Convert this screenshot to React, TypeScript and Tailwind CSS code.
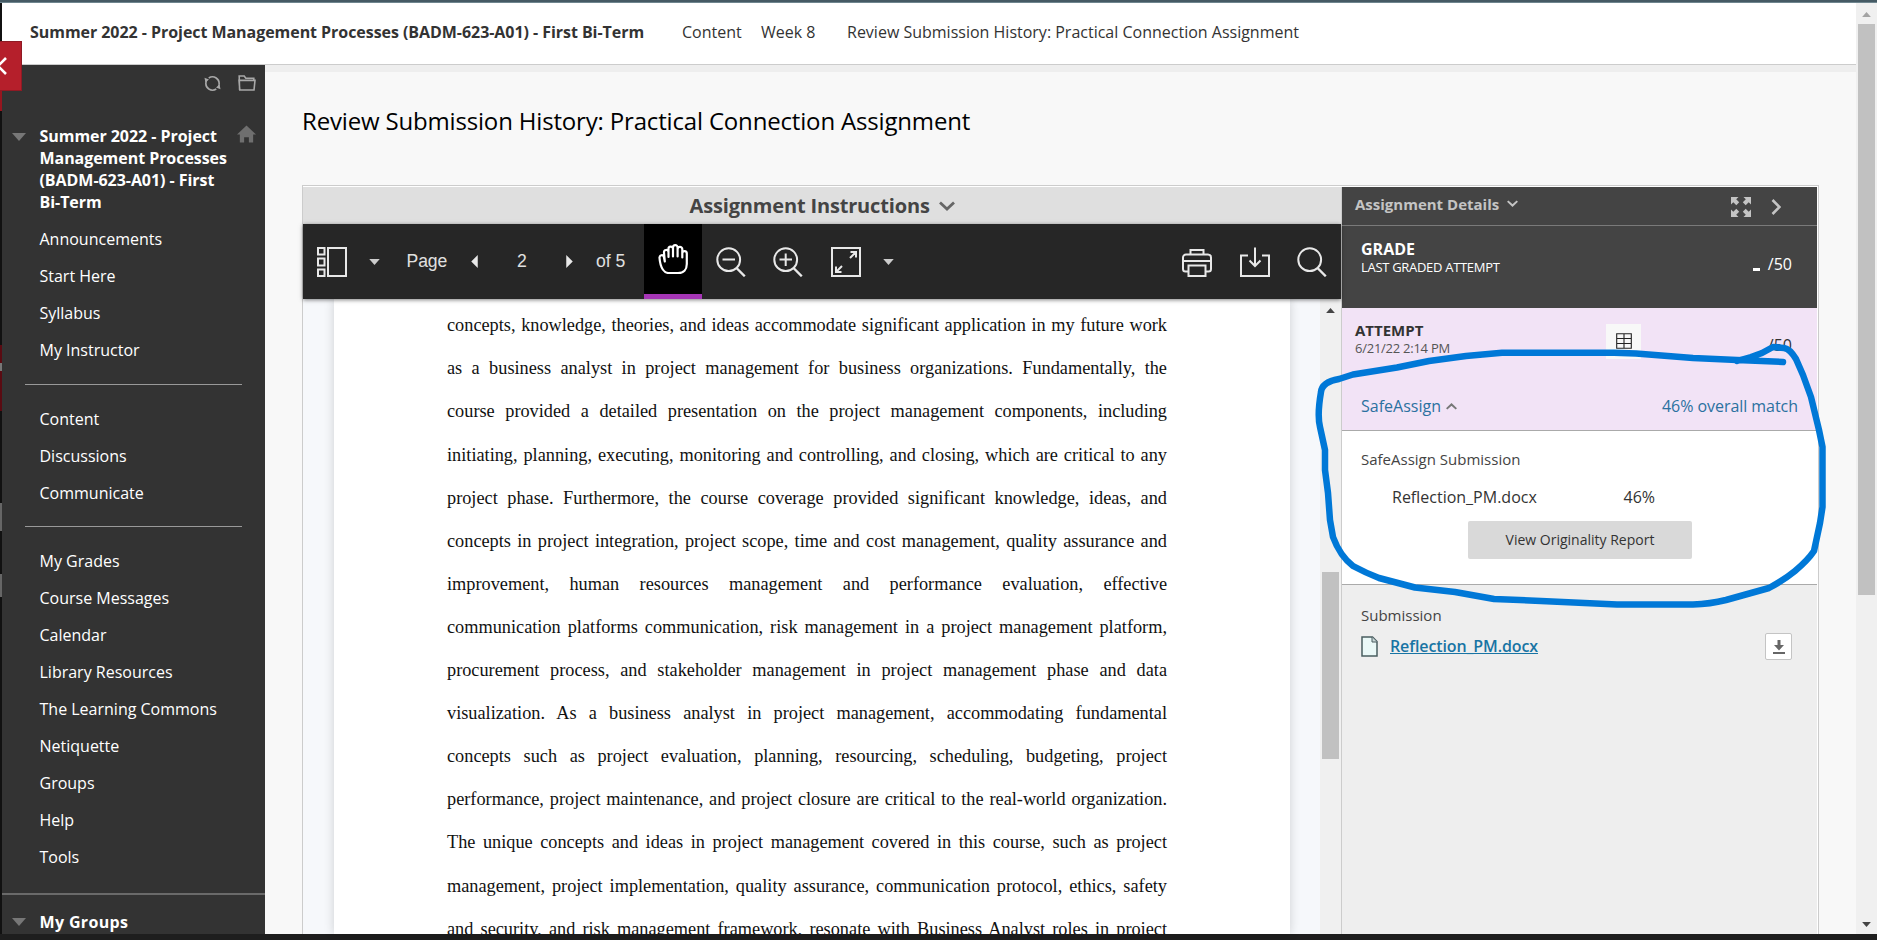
import { clsx } from "clsx";

const menuGroups = [
  ["Announcements", "Start Here", "Syllabus", "My Instructor"],
  ["Content", "Discussions", "Communicate"],
  [
    "My Grades",
    "Course Messages",
    "Calendar",
    "Library Resources",
    "The Learning Commons",
    "Netiquette",
    "Groups",
    "Help",
    "Tools",
  ],
];

const documentLines = [
  "concepts, knowledge, theories, and ideas accommodate significant application in my future work",
  "as a business analyst in project management for business organizations. Fundamentally, the",
  "course provided a detailed presentation on the project management components, including",
  "initiating, planning, executing, monitoring and controlling, and closing, which are critical to any",
  "project phase. Furthermore, the course coverage provided significant knowledge, ideas, and",
  "concepts in project integration, project scope, time and cost management, quality assurance and",
  "improvement, human resources management and performance evaluation, effective",
  "communication platforms communication, risk management in a project management platform,",
  "procurement process, and stakeholder management in project management phase and data",
  "visualization. As a business analyst in project management, accommodating fundamental",
  "concepts such as project evaluation, planning, resourcing, scheduling, budgeting, project",
  "performance, project maintenance, and project closure are critical to the real-world organization.",
  "The unique concepts and ideas in project management covered in this course, such as project",
  "management, project implementation, quality assurance, communication protocol, ethics, safety",
  "and security, and risk management framework, resonate with Business Analyst roles in project",
];

interface iconProps {
  className?: string;
}

const CaretDown = ({ className }: iconProps) => (
  <svg viewBox="0 0 14 8" className={className} fill="currentColor" aria-hidden="true">
    <path d="M0 0h14L7 8z" />
  </svg>
);

const CaretUp = ({ className }: iconProps) => (
  <svg viewBox="0 0 14 8" className={className} fill="currentColor" aria-hidden="true">
    <path d="M0 8h14L7 0z" />
  </svg>
);

const Chevron = ({ className }: iconProps) => (
  <svg
    viewBox="0 0 16 10"
    className={className}
    fill="none"
    stroke="currentColor"
    strokeWidth="2.8"
    aria-hidden="true"
  >
    <path d="M1 1.5l7 6.500 7-6.500" />
  </svg>
);

const ToolIcon = ({ className, children }: iconProps & { children: React.ReactNode }) => (
  <svg
    viewBox="0 0 30 30"
    className={clsx("size-[30px] shrink-0", className)}
    fill="none"
    stroke="#e8e8e8"
    strokeWidth="2"
    aria-hidden="true"
  >
    {children}
  </svg>
);

const Lens = () => (
  <>
    <circle cx="12.7" cy="12.7" r="11.4" />
    <path d="M20.5 21l8.3 8.3" strokeWidth="2.4" />
  </>
);

const Sidebar = () => (
  <aside className="w-[263px] shrink-0 overflow-hidden bg-[#333] text-white">
    <div className="flex h-[36px] items-center justify-end gap-[17px] pr-[9px]">
      <svg viewBox="0 0 18 18" className="size-[17px]" fill="none" stroke="#a8a8a8" strokeWidth="1.7">
        <path d="M5.500 15A7 7 0 0 1 3 5.200M5 3.200A7 7 0 0 1 15.800 10.500M12.500 3A7 7 0 0 1 15 12.800M13 14.800A7 7 0 0 1 2.200 7.500" />
        <path d="M.5 3l1 4.800 3.800-3zM17.500 15l-1-4.800-3.800 3z" fill="#a8a8a8" stroke="none" />
      </svg>
      <svg viewBox="0 0 18 18" className="size-[18px]" fill="none" stroke="#a8a8a8" strokeWidth="1.6">
        <path d="M1.6 16L1.2 2h5l1.6 2.2h8V6.500M1 6.400h16L16 16H1.800z" />
      </svg>
    </div>
    <div className="flex pt-[24px] pl-[10px]">
      <CaretDown className="mt-[8px] h-[8px] w-[14px] text-[#777]" />
      <h2 className="ml-[13.5px] w-[192px] text-base leading-[22px] font-bold tracking-[-0.05px]">
        Summer 2022 - Project Management Processes (BADM-623-A01) - First Bi-Term
      </h2>
      <svg viewBox="0 0 20 18" className="ml-[5px] h-[18px] w-[19px]" fill="#6f6f6f">
        <path d="M10 0L20 9.500H17V18H12.500V12.500H7.500V18H3V9.500H0z" />
      </svg>
    </div>
    <nav className="pt-[8px]">
      {menuGroups.map((group, index) => (
        <ul
          key={group[0]}
          className={clsx(
            index > 0 && "ml-[23px] w-[217px] border-t border-[#999] pt-[16px]",
            index === 1 && "mt-[15px]",
            index === 2 && "mt-[14px]"
          )}
        >
          {group.map((item) => (
            <li
              key={item}
              className={clsx(
                "h-[37px] text-base leading-[37px]",
                index > 0 ? "pl-[14.5px]" : "pl-[37.5px]"
              )}
            >
              {item}
            </li>
          ))}
        </ul>
      ))}
    </nav>
    <div className="mt-[17px] flex items-center border-t-2 border-[#6a6a6a] pt-[16px] pl-[10px]">
      <CaretDown className="h-[8px] w-[14px] text-[#777]" />
      <h2 className="ml-[13.5px] text-base leading-[22px] font-bold tracking-[0.35px]">My Groups</h2>
    </div>
  </aside>
);

const Toolbar = () => (
  <div className="relative z-10 flex h-[75px] shrink-0 items-center bg-[#262626] pr-[14px] pl-[14px] font-['Liberation_Sans',Arial,sans-serif] text-[17.6px] text-[#e0e0e0] shadow-[0_1px_4px_rgba(0,0,0,0.5)]">
    <ToolIcon>
      <path d="M11 1h18v28H11z" />
      <path d="M1 1h6.500v6.500H1zM1 11.500h6.500v7H1zM1 22.500h6.500V29H1z" />
    </ToolIcon>
    <CaretDown className="ml-[22px] h-[6px] w-[11px] text-[#ccc]" />
    <span className="ml-[26.5px] w-[42.500px] tracking-[-0.1px]">Page</span>
    <svg viewBox="0 0 7 14" className="ml-[22px] h-[13px] w-[7px]" fill="#e8e8e8">
      <path d="M7 0v14L0 7z" />
    </svg>
    <span className="ml-[28px] w-[32px] pb-[1px] text-center">2</span>
    <svg viewBox="0 0 7 14" className="ml-[28px] h-[13px] w-[7px]" fill="#e8e8e8">
      <path d="M0 0v14l7-7z" />
    </svg>
    <span className="ml-[23px] w-[48px] whitespace-nowrap">of 5</span>
    <div className="flex h-[75px] w-[58px] justify-center border-b-[5px] border-[#a535b5] bg-black pt-[20px]">
      <svg
        viewBox="0 0 30 30"
        className="size-[30px]"
        fill="none"
        stroke="#fff"
        strokeWidth="2.2"
        strokeLinecap="round"
        strokeLinejoin="round"
      >
        <path d="M6.800 17.500L5.800 12.500C5 10.300 1.300 10.800 1.500 13.800C1.800 18 2.800 22.500 4.800 25.500C6.800 28.500 9 29.200 12 29.200H20C25.500 29.200 28.800 25.500 28.800 20V9.500C28.800 6.200 24.300 6.200 24.300 9.500V13.500M24.300 12V5.200C24.300 2.200 19.600 2.200 19.600 5.200V12.500M19.600 7V3.500C19.600 .3 15 .3 15 3.500V12.500M15 6V4.500C14.500 1.800 10.300 2 10.500 5V13M10.500 8C10 5 5.800 5.500 6 8.500L6.800 17.500" />
      </svg>
    </div>
    <ToolIcon className="ml-[14px]">
      <Lens />
      <path d="M6.500 12.500h12.500" />
    </ToolIcon>
    <ToolIcon className="ml-[27px]">
      <Lens />
      <path d="M6.500 12.500h12.500M12.700 6.500V19" />
    </ToolIcon>
    <ToolIcon className="ml-[28px]">
      <path d="M1 1h28v28H1z" />
      <path d="M19 11l6-6M19.500 5H25v5.500M11 19l-6 6M5 19.500V25h5.500" />
    </ToolIcon>
    <CaretDown className="ml-[22px] h-[6px] w-[11px] text-[#ccc]" />
    <ToolIcon className="ml-auto">
      <path d="M8.500 7.500V3h13v4.500M5.500 24.500H3.500A2.500 2.500 0 0 1 1 22V10.500A3 3 0 0 1 4 7.500h22a3 3 0 0 1 3 3V22a2.500 2.500 0 0 1-2.500 2.500h-2M1 14h28M6.500 18.500h17V29h-17z" />
    </ToolIcon>
    <ToolIcon className="ml-[28px]">
      <path d="M8 8.500H1V29h28V8.500h-7M15 .5v18M9.500 13.500l5.500 5.500 5.500-5.500" />
    </ToolIcon>
    <ToolIcon className="ml-[27px]">
      <Lens />
    </ToolIcon>
  </div>
);

const DocumentViewer = () => (
  <div className="flex w-[1038px] shrink-0 flex-col">
    <div className="flex h-[37px] shrink-0 items-center bg-[#dfdfdf] pl-[386.5px]">
      <h3 className="w-[249px] text-[20px] font-bold tracking-[-0.16px] whitespace-nowrap text-[#444]">
        Assignment Instructions
      </h3>
      <Chevron className="h-[10px] w-[16px] text-[#666]" />
    </div>
    <Toolbar />
    <div className="flex min-h-0 flex-1 bg-[#f6f8fb]">
      <div className="ml-[31px] w-[956px] overflow-hidden bg-white px-[113px] pt-[5.3px] shadow-[0_0_10px_rgba(0,0,0,0.16)]">
        <div className="w-[720px] font-['Liberation_Serif','Times_New_Roman',serif] text-[18.3px] leading-[43.1px] text-[#111]">
          {documentLines.map((line) => (
            <p key={line} className="[text-align-last:justify] whitespace-nowrap">
              {line}
            </p>
          ))}
        </div>
      </div>
      <div className="ml-auto w-[21px] bg-[#f0f0f0] pt-[9px]">
        <CaretUp className="ml-[6px] h-[5px] w-[9px] text-[#444]" />
        <div className="mt-[259px] ml-[2px] h-[187px] w-[17px] bg-[#c1c1c1]" />
      </div>
    </div>
  </div>
);

const AssignmentDetails = () => (
  <div className="flex w-[476px] shrink-0 flex-col border-l border-[#ccc] bg-[#eee]">
    <div className="flex h-[39px] items-center border-b border-[#7a7a7a] bg-[#444] pl-[13px] text-[#c4c4c4]">
      <h3 className="w-[144px] pb-[3px] text-[15px] font-bold whitespace-nowrap">Assignment Details</h3>
      <Chevron className="mb-[5px] ml-[8px] h-[7px] w-[11px]" />
      <svg viewBox="0 0 20 20" className="mt-[1px] ml-auto size-[20px]" fill="currentColor">
        <path d="M0 0h7.500L5.200 2.300l3 3-2.900 2.900-3-3L0 7.500zM20 0v7.500l-2.300-2.300-3 3-2.900-2.900 3-3L12.500 0zM0 20v-7.500l2.300 2.300 3-3 2.900 2.900-3 3L7.500 20zM20 20h-7.500l2.300-2.300-3-3 2.900-2.900 3 3 2.300-2.300z" />
      </svg>
      <svg
        viewBox="0 0 10 16"
        className="mt-[1px] mr-[36px] ml-[20px] h-[16px] w-[10px]"
        fill="none"
        stroke="currentColor"
        strokeWidth="2.6"
      >
        <path d="M1.500 1l7 7-7 7" />
      </svg>
    </div>
    <div className="flex h-[82px] justify-between bg-[#444] pr-[25px] pl-[19px] text-white">
      <div className="pt-[13px]">
        <h4 className="text-base leading-[20px] font-bold">GRADE</h4>
        <p className="text-[13px] leading-[16px] tracking-[-0.3px]">LAST GRADED ATTEMPT</p>
      </div>
      <div className="flex h-[24px] gap-[8px] self-start pt-[26px] text-base leading-[24px]">
        <span className="mt-[16px] h-[3px] w-[7px] bg-white" />
        <span>/50</span>
      </div>
    </div>
    <div className="h-[123px] border-b border-[#aaa] bg-[#f2e3f6] pt-[12px] pr-[19px] pl-[13px]">
      <div className="flex h-[74px] pr-[6px]">
        <div className="w-[251px]">
          <h4 className="text-[15px] leading-[20px] font-bold text-[#333]">ATTEMPT</h4>
          <p className="text-[13px] leading-[17px] tracking-[-0.25px] text-[#555]">6/21/22 2:14 PM</p>
        </div>
        <div className="mt-[4px] flex size-[35px] items-center justify-center bg-[#f8f8f8]">
          <svg viewBox="0 0 16 16" className="mb-[2px] size-[16px]" fill="none" stroke="#222" strokeWidth="1.1">
            <path d="M.7.7h14.600v14.600H.7zM.7 5.500h14.600M.7 10.500h14.600M8 .7v14.600" />
          </svg>
        </div>
        <span className="mt-[13px] ml-auto text-base leading-[24px] text-[#333]">/50</span>
      </div>
      <div className="flex items-center pl-[6px] text-base leading-[24px] text-[#2b71a0]">
        <span>SafeAssign</span>
        <Chevron className="ml-[5px] h-[7px] w-[11px] rotate-180 text-[#777]" />
        <span className="ml-auto tracking-[-0.05px]">46% overall match</span>
      </div>
    </div>
    <div className="h-[154px] border-b border-[#aaa] bg-white pt-[17px] pl-[19px] text-[#333]">
      <p className="text-[15px] leading-[22px] text-[#444]">SafeAssign Submission</p>
      <div className="mt-[15px] flex pl-[31px] text-base leading-[24px]">
        <span className="w-[231.5px]">Reflection_PM.docx</span>
        <span>46%</span>
      </div>
      <button
        type="button"
        className="mt-[12px] ml-[107px] h-[38px] w-[224px] rounded-[2px] bg-[#d9d9d9] pb-[2px] text-[14px] text-[#333]"
      >
        View Originality Report
      </button>
    </div>
    <div className="pt-[19px] pr-[25px] pl-[19px]">
      <p className="text-[15px] leading-[22px] text-[#444]">Submission</p>
      <div className="mt-[7px] flex items-center">
        <svg viewBox="0 0 17 21" className="h-[21px] w-[17px]" stroke="#4a5d60" strokeWidth="1.5">
          <path d="M1 1h10.500L16 5.500V20H1z" fill="#eaf8f7" />
          <path d="M11 1v5h5" fill="#c9d8d8" strokeWidth="1" />
        </svg>
        <a className="mb-[2px] ml-[12px] text-base leading-[24px] font-semibold tracking-[-0.1px] text-[#1874a4] underline">
          Reflection_PM.docx
        </a>
        <div className="ml-auto flex h-[27px] w-[27px] items-center justify-center rounded-[2px] border border-[#c4c4c4] bg-white">
          <svg viewBox="0 0 12 14" className="h-[14px] w-[12px]" fill="#666">
            <path d="M4.500 0h3v5H11L6 10.500 1 5h3.500zM0 12h12v2H0z" />
          </svg>
        </div>
      </div>
    </div>
  </div>
);

const App = () => (
  <div className="relative flex h-[940px] w-[1877px] flex-col overflow-hidden bg-[#1e1e1e] font-['Open_Sans',sans-serif]">
    <div className="h-[3px] shrink-0 border-b border-[#6f868f] bg-[#455a64]" />
    <div className="flex h-[931px] shrink-0">
      <div className="w-[2px] shrink-0 bg-[#111] pt-[87px]">
        <div className="h-[21px] bg-[#96161f]" />
        <div className="mt-[234px] h-[18px] bg-[#5a0b12]" />
        <div className="h-[8px] bg-[#777]" />
        <div className="h-[40px] bg-[#5a0b12]" />
        <div className="mt-[92px] h-[28px] bg-[#666]" />
        <div className="mt-[43px] h-[23px] bg-[#666]" />
      </div>

      <div className="flex w-[1854px] shrink-0 flex-col bg-[#f8f8f8]">
        <header className="flex h-[62px] shrink-0 items-center border-b border-[#ccc] bg-white pb-[3px] pl-[28px] text-base whitespace-nowrap text-[#333]">
          <span className="w-[652px] font-bold tracking-[-0.05px]">
            Summer 2022 - Project Management Processes (BADM-623-A01) - First Bi-Term
          </span>
          <span className="w-[79px]">Content</span>
          <span className="w-[86px]">Week 8</span>
          <span>Review Submission History: Practical Connection Assignment</span>
        </header>
        <div className="flex min-h-0 flex-1">
          <Sidebar />
          <main className="flex flex-1 flex-col border-t-[7px] border-[#eee] pl-[37px]">
            <h1 className="pt-[33px] text-[24px] leading-[32px] tracking-[-0.17px] text-black">
              Review Submission History: Practical Connection Assignment
            </h1>
            <div className="mt-[48px] flex min-h-0 w-[1517px] flex-1 border-x border-t border-[#ccc] bg-white pt-[1px] pr-[1px]">
              <DocumentViewer />
              <AssignmentDetails />
            </div>
          </main>
        </div>
      </div>

      <div className="flex flex-1 flex-col items-center bg-[#f0f0f0] pt-[9px] pb-[7px]">
        <CaretUp className="h-[5px] w-[9px] text-[#a3a3a3]" />
        <div className="mt-[7px] h-[571px] w-[17px] bg-[#c1c1c1]" />
        <CaretDown className="mt-auto h-[5px] w-[9px] text-[#444]" />
      </div>
    </div>

    {/* collapse tab of the course menu */}
    <div className="absolute top-[41px] left-0 flex h-[50px] w-[22px] items-center border border-l-0 border-[#8f1a24] bg-[#b51f2b]">
      <svg viewBox="0 0 8 20" className="h-[20px] w-[8px]" fill="none" stroke="#fff" strokeWidth="2.6">
        <path d="M6 2l-8 8 8 8" />
      </svg>
    </div>

    {/* hand-drawn marker around the SafeAssign block */}
    <svg
      viewBox="0 0 1877 940"
      className="pointer-events-none absolute inset-0 h-[940px] w-[1877px]"
      fill="none"
      stroke="#0078d7"
      strokeWidth="6.5"
      strokeLinecap="round"
      strokeLinejoin="round"
    >
      <path d="M1783 362L1737 360L1693 358L1636 353.500L1614 352.700H1502L1466 356L1429 361L1397 367.500L1353 374.500L1339 379Q1322 382 1321 392Q1317 415 1320 427L1325 450V470L1328 493L1330 520L1333 537Q1340 556 1353 566Q1366 573 1379 578L1415 587.500L1455 592L1494 599L1541 601L1617 604.500H1693Q1710 604 1726 600L1769 588Q1784 580 1795 571Q1808 560 1814 551L1820 523L1822.500 507V447L1819 430L1811 397L1803 375L1796 359Q1790 349 1784 348L1773 347L1762 353L1751 357L1737 361" />
    </svg>
  </div>
);

export default App;
